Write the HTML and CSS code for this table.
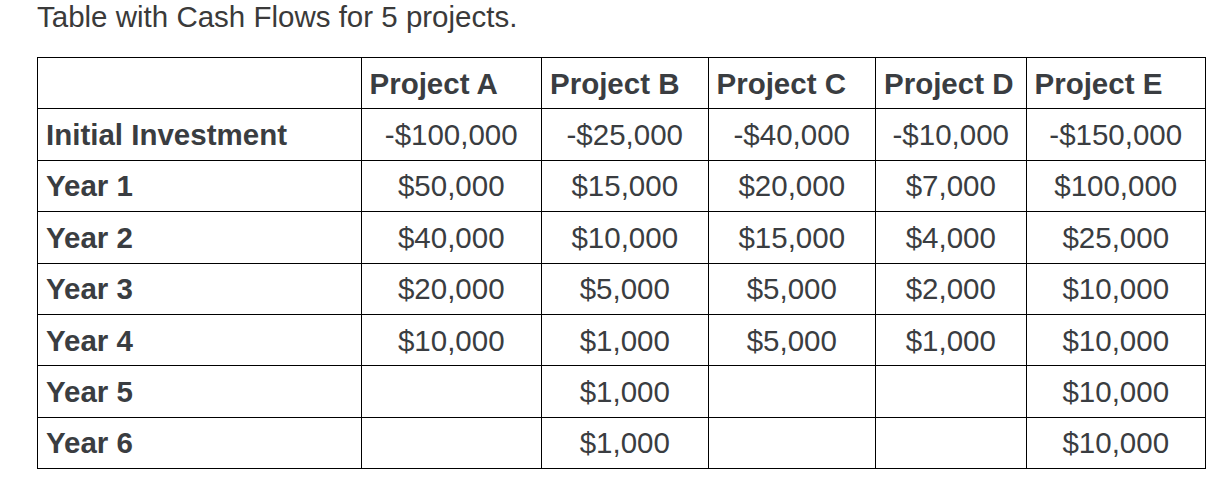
FILE: index.html
```
<!DOCTYPE html>
<html>
<head>
<meta charset="utf-8">
<link rel="stylesheet" href="styles.css">
</head>
<body>
<p class="title">Table with Cash Flows for 5 projects.</p>
<table class="cf">
<colgroup>
<col class="c-label"><col class="c-a"><col class="c-b"><col class="c-c"><col class="c-d"><col class="c-e">
</colgroup>
<tr class="head"><th></th><th>Project A</th><th>Project B</th><th>Project C</th><th>Project D</th><th>Project E</th></tr>
<tr><th>Initial Investment</th><td>-$100,000</td><td>-$25,000</td><td>-$40,000</td><td>-$10,000</td><td>-$150,000</td></tr>
<tr><th>Year 1</th><td>$50,000</td><td>$15,000</td><td>$20,000</td><td>$7,000</td><td>$100,000</td></tr>
<tr><th>Year 2</th><td>$40,000</td><td>$10,000</td><td>$15,000</td><td>$4,000</td><td>$25,000</td></tr>
<tr><th>Year 3</th><td>$20,000</td><td>$5,000</td><td>$5,000</td><td>$2,000</td><td>$10,000</td></tr>
<tr><th>Year 4</th><td>$10,000</td><td>$1,000</td><td>$5,000</td><td>$1,000</td><td>$10,000</td></tr>
<tr><th>Year 5</th><td></td><td>$1,000</td><td></td><td></td><td>$10,000</td></tr>
<tr><th>Year 6</th><td></td><td>$1,000</td><td></td><td></td><td>$10,000</td></tr>
</table>
</body>
</html>
```
FILE: styles.css
```
html, body {
  margin: 0;
  padding: 0;
  background: #fff;
}
body {
  font-family: "Liberation Sans", Arial, sans-serif;
  font-size: 29.5px;
  color: #3a3d41;
}
.title {
  margin: 0 0 24px 37px;
  line-height: 33px;
  color: #3a3a3a;
}
.cf {
  margin-left: 37px;
  border-collapse: collapse;
  table-layout: fixed;
  width: 1168px;
}
.c-label { width: 323.5px; }
.c-a { width: 180.5px; }
.c-b { width: 166.5px; }
.c-c { width: 167.5px; }
.c-d { width: 150.5px; }
.c-e { width: 179.5px; }
.cf tr {
  height: 51.4px;
}
.cf th, .cf td {
  border: 1px solid #000;
  padding: 0 8px;
  vertical-align: middle;
  white-space: nowrap;
  line-height: 33px;
}
.cf th {
  text-align: left;
  font-weight: bold;
}
.cf td {
  text-align: center;
  font-weight: normal;
}
```
